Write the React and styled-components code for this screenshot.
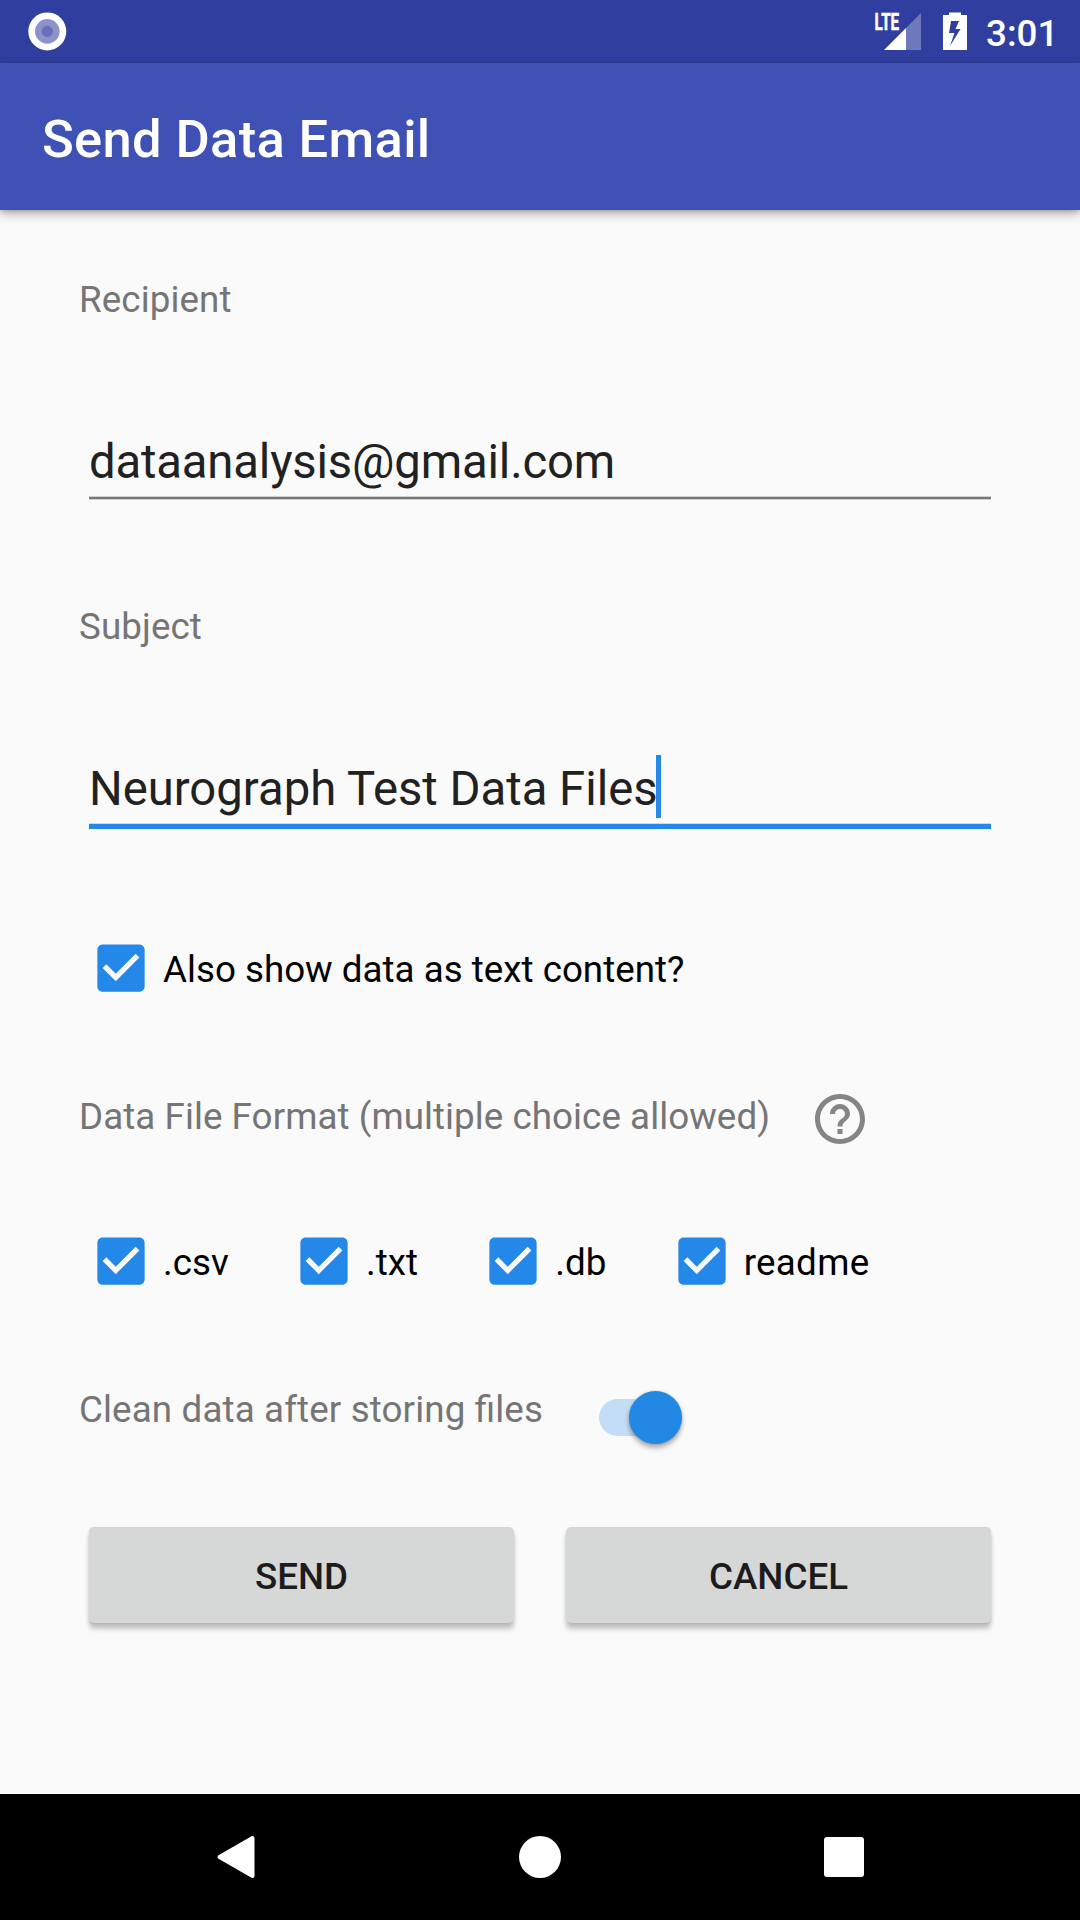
import React, { useState } from "react";
import styled, { createGlobalStyle } from "styled-components";

const GlobalStyle = createGlobalStyle`
  * { box-sizing: border-box; }
  body { margin: 0; background: #fafafa; }
`;

const Screen = styled.div`
  display: flex;
  flex-direction: column;
  width: 1080px;
  height: 1920px;
  overflow: hidden;
  background: #fafafa;
  font-family: Roboto, "Liberation Sans", sans-serif;
  font-size: 36.75px;
  line-height: 43px;
  font-feature-settings: "liga" 1;
  color: #212121;
`;

const StatusBar = styled.header`
  display: flex;
  justify-content: space-between;
  flex: none;
  height: 63px;
  padding: 0 24px 0 28px;
  background: #303f9f;
  color: #fff;
`;

const StatusIcons = styled.div`
  display: flex;
`;

const Clock = styled.span`
  padding-top: 12px;
  width: 70px;
  margin-left: 20px;
  font-weight: 500;
  white-space: nowrap;
`;

const AppBar = styled.div`
  display: flex;
  align-items: center;
  flex: none;
  height: 147px;
  padding: 5px 42px 0;
  background: #3f51b5;
  box-shadow: 0 4px 10px rgba(0, 0, 0, 0.28), 0 1px 4px rgba(0, 0, 0, 0.18);
`;

const Title = styled.h1`
  margin: 0;
  font-size: 52.5px;
  line-height: 62px;
  font-weight: 500;
  letter-spacing: 0.33px;
  color: #fff;
`;

const Form = styled.main`
  display: flex;
  flex-direction: column;
  flex: 1;
  padding: 68px 79px 0;
`;

const Label = styled.span`
  margin-top: ${(p) => p.$drop || 0}px;
  color: #757575;
  letter-spacing: ${(p) => p.$track || 0.1}px;
  white-space: nowrap;
`;

const Field = styled.div`
  display: flex;
  flex-direction: column;
  height: ${(p) => p.$height}px;
`;

const FieldBox = styled.div`
  display: flex;
  align-items: center;
  height: 73px;
  margin: 102px 10px 0;
  font-size: 47.25px;
  line-height: 56px;
`;

const FieldText = styled.span`
  margin-top: 5px;
  letter-spacing: ${(p) => p.$track || 0}px;
  white-space: nowrap;
`;

const Caret = styled.i`
  width: 5px;
  height: 63px;
  margin-left: -2px;
  background: #2388e7;
`;

const Underline = styled.div`
  flex: none;
  height: ${(p) => (p.$active ? 5 : 2)}px;
  margin: 1px 10px 0;
  background: ${(p) => (p.$active ? "#2388e7" : "#757575")};
  box-shadow: ${(p) =>
    p.$active
      ? "0 -1px rgba(35, 136, 231, 0.25)"
      : "0 -1px rgba(117, 117, 117, 0.3), 0 1px rgba(117, 117, 117, 0.3)"};
`;

const CheckLabel = styled.label`
  display: flex;
  align-items: center;
  height: 84px;
  color: #000;
  white-space: nowrap;
`;

const CheckText = styled.span`
  padding-top: 2px;
  letter-spacing: ${(p) => p.$track || 0}px;
`;

const HiddenInput = styled.input`
  position: absolute;
  opacity: 0;
  pointer-events: none;
`;

const LabelRow = styled.div`
  display: flex;
  align-items: flex-start;
  gap: ${(p) => p.$gap}px;
  height: ${(p) => p.$height}px;
  margin-top: ${(p) => p.$top}px;
`;

const SwitchTrack = styled.button`
  display: flex;
  align-items: center;
  justify-content: ${(p) => (p.$on ? "flex-end" : "flex-start")};
  width: 83px;
  height: 37px;
  margin-top: 11px;
  padding: 0;
  border: 0;
  border-radius: 19px;
  background: ${(p) => (p.$on ? "#c3ddf6" : "#b9b9b9")};
`;

const SwitchThumb = styled.span`
  flex: none;
  width: 53px;
  height: 53px;
  border-radius: 50%;
  background: ${(p) => (p.$on ? "#2388e3" : "#f1f1f1")};
  box-shadow: 0 4px 5px rgba(0, 0, 0, 0.3), 0 0 3px rgba(0, 0, 0, 0.16);
`;

const Actions = styled.div`
  display: flex;
  gap: 52px;
  margin: 77px 10px 0;
`;

const ActionButton = styled.button`
  flex: 1;
  height: 96px;
  padding: 3px 0 0;
  border: 0;
  border-radius: 5px;
  background: #d6d8d7;
  color: #1c1c1c;
  font: 500 36.75px/43px Roboto, "Liberation Sans", sans-serif;
  box-shadow: 0 6px 5px rgba(0, 0, 0, 0.22), 0 1px 3px rgba(0, 0, 0, 0.1);
`;

const NavBar = styled.nav`
  display: flex;
  justify-content: center;
  align-items: center;
  gap: 220px;
  flex: none;
  height: 126px;
  background: #000;
`;

const Icon = styled.svg`
  display: block;
  flex: none;
`;

function CheckBox({ children, track }) {
  const [on, setOn] = useState(true);
  return (
    <CheckLabel>
      <HiddenInput type="checkbox" checked={on} onChange={() => setOn(!on)} />
      <Icon width="84" height="84" viewBox="-4 -4 32 32">
        {on ? (
          <path
            fill="#2388e7"
            d="M19 3H5c-1.11 0-2 .9-2 2v14c0 1.1.89 2 2 2h14c1.11 0 2-.9 2-2V5c0-1.1-.89-2-2-2zm-9 14l-5-5 1.41-1.41L10 14.17l7.59-7.59L19 8l-9 9z"
          />
        ) : (
          <rect x="4" y="4" width="16" height="16" rx="1" fill="none" stroke="#757575" strokeWidth="2" />
        )}
      </Icon>
      <CheckText $track={track}>{children}</CheckText>
    </CheckLabel>
  );
}

function Switch() {
  const [on, setOn] = useState(true);
  return (
    <SwitchTrack $on={on} role="switch" aria-checked={on} onClick={() => setOn(!on)}>
      <SwitchThumb $on={on} />
    </SwitchTrack>
  );
}

function TextField({ label, value, active, height, track }) {
  return (
    <Field $height={height}>
      <Label>{label}</Label>
      <FieldBox>
        <FieldText $track={track}>{value}</FieldText>
        {active && <Caret />}
      </FieldBox>
      <Underline $active={active} />
    </Field>
  );
}

export default function App() {
  return (
    <Screen>
      <GlobalStyle />
      <StatusBar>
        <Icon width="39" height="63" viewBox="28 0 39 63">
          <circle cx="47.3" cy="31.4" r="19" fill="#fff" />
          <circle cx="47.3" cy="31.4" r="12.3" fill="#8a93ca" />
          <circle cx="47.3" cy="31.4" r="5.6" fill="#6670b8" />
        </Icon>
        <StatusIcons>
          <Icon width="48" height="63" viewBox="874 0 48 63">
            <text
              x="874.6"
              y="30"
              fill="#fff"
              stroke="#fff"
              strokeWidth="0.6"
              fontSize="23.5"
              fontWeight="700"
              textLength="24.5"
              lengthAdjust="spacingAndGlyphs"
            >
              LTE
            </text>
            <path d="M906 28L921 13V50H906z" fill="#fff" fillOpacity="0.3" />
            <path d="M884 50L906 28V50z" fill="#fff" />
          </Icon>
          <Icon width="44" height="63" viewBox="922 0 44 63" overflow="visible">
            <path
              fill="#fff"
              fillRule="evenodd"
              d="M949 12.5h12V15h6v35h-24V15h6zM951 21L949 33h5.500L950 46L960.500 29H955.500L959 21z"
            />
          </Icon>
          <Clock>3:01</Clock>
        </StatusIcons>
      </StatusBar>
      <AppBar>
        <Title>Send Data Email</Title>
      </AppBar>
      <Form>
        <TextField label="Recipient" value="dataanalysis@gmail.com" height={327} track={-0.17} />
        <TextField label="Subject" value="Neurograph Test Data Files" height={321} active />
        <div>
          <CheckBox>Also show data as text content?</CheckBox>
        </div>
        <LabelRow $gap={40} $height={60} $top={79}>
          <Label $drop={6} $track={0.06}>
            Data File Format (multiple choice allowed)
          </Label>
          <Icon width="60" height="60" viewBox="0 0 24 24">
            <path
              fill="#858585"
              d="M11 18h2v-2h-2v2zm1-16C6.48 2 2 6.48 2 12s4.480 10 10 10 10-4.480 10-10S17.520 2 12 2zm0 18c-4.410 0-8-3.590-8-8s3.590-8 8-8 8 3.590 8 8-3.590 8-8 8zm0-14c-2.210 0-4 1.790-4 4h2c0-1.100.9-2 2-2s2 .9 2 2c0 2-3 1.750-3 5h2c0-2.250 3-2.500 3-5 0-2.210-1.790-4-4-4z"
            />
          </Icon>
        </LabelRow>
        <LabelRow $gap={53.3} $height={84} $top={70}>
          <CheckBox>.csv</CheckBox>
          <CheckBox>.txt</CheckBox>
          <CheckBox>.db</CheckBox>
          <CheckBox track={0.3}>readme</CheckBox>
        </LabelRow>
        <LabelRow $gap={56} $height={62} $top={85}>
          <Label $track={0.13}>Clean data after storing files</Label>
          <Switch />
        </LabelRow>
        <Actions>
          <ActionButton>SEND</ActionButton>
          <ActionButton>CANCEL</ActionButton>
        </Actions>
      </Form>
      <NavBar>
        <Icon width="84" height="84" viewBox="194 1815 84 84">
          <path
            d="M219.500 1857L252.500 1838V1876z"
            fill="#fff"
            stroke="#fff"
            strokeWidth="4"
            strokeLinejoin="round"
          />
        </Icon>
        <Icon width="84" height="84" viewBox="498 1815 84 84">
          <circle cx="540" cy="1857" r="21" fill="#fff" />
        </Icon>
        <Icon width="84" height="84" viewBox="802 1815 84 84">
          <rect x="824" y="1837" width="40" height="40" rx="3" fill="#fff" />
        </Icon>
      </NavBar>
    </Screen>
  );
}
